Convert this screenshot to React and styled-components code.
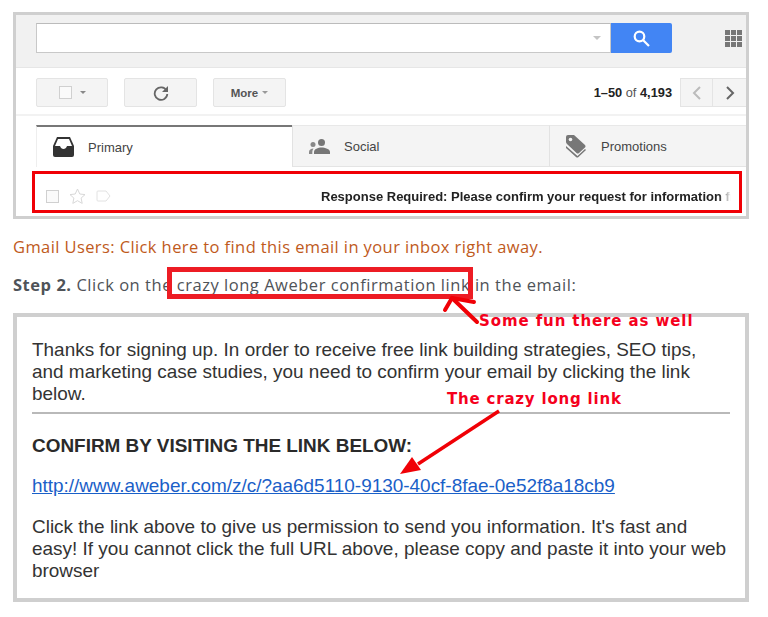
import React from 'react';
import styled, { createGlobalStyle } from 'styled-components';

const red = '#f00006';
const gray = '#cfcfcf';

const GlobalStyle = createGlobalStyle`
  body {
    margin: 0;
    background: #fff;
    font-family: "Liberation Sans", Arial, sans-serif;
  }
`;

const Page = styled.div`
  position: relative;
  width: 768px;
  height: 617px;
  padding: 12px 0 0 13px;
  box-sizing: border-box;
  overflow: hidden;
`;

const Panel = styled.div`
  width: 736px;
  box-sizing: border-box;
  height: 207px;
  border: 3px solid ${gray};
  overflow: hidden;
`;

const SearchBand = styled.div`
  height: 53px;
  box-sizing: border-box;
  padding: 8px 4px 0 20px;
  display: flex;
  background: #f1f1f1;
  border-bottom: 1px solid #e6e6e6;
`;

const SearchInput = styled.div`
  width: 575px;
  height: 30px;
  box-sizing: border-box;
  background: #fff;
  border: 1px solid #c8c8c8;
  border-top-color: #bbb;
  display: flex;
  align-items: center;
  justify-content: flex-end;
  padding-right: 9px;
`;

const Caret = styled.span`
  width: 0;
  height: 0;
  margin-left: ${p => p.$gap || 0}px;
  border-left: ${p => p.$size || 4}px solid transparent;
  border-right: ${p => p.$size || 4}px solid transparent;
  border-top: ${p => p.$size || 4}px solid ${p => p.$color || '#c4c4c4'};
`;

const SearchButton = styled.div`
  width: 61px;
  height: 30px;
  background: #4285f4;
  border-radius: 0 2px 2px 0;
  display: flex;
  align-items: center;
  justify-content: center;
`;

const AppsGrid = styled.div`
  margin: 7px 0 0 53px;
  width: 17px;
  height: 17px;
  display: grid;
  grid-template-columns: repeat(3, 5px);
  grid-auto-rows: 5px;
  gap: 1px;
`;

const AppsDot = styled.span`
  background: #777;
`;

const Toolbar = styled.div`
  height: 48px;
  box-sizing: border-box;
  padding: 10px 0 0 20px;
  display: flex;
  align-items: flex-start;
  gap: 16px;
  border-bottom: 2px solid #f2f2f2;
`;

const ToolButton = styled.div`
  width: ${p => p.$width || 73}px;
  height: 29px;
  box-sizing: border-box;
  background: #f4f4f4;
  border: 1px solid #e4e4e4;
  border-radius: 2px;
  display: flex;
  align-items: center;
  justify-content: center;
  font-size: 11.5px;
  font-weight: bold;
  color: #555;
`;

const Checkbox = styled.span`
  width: 13px;
  height: 13px;
  box-sizing: border-box;
  background: #fafafa;
  border: 1px solid #d0d0d0;
`;

const Pager = styled.div`
  margin-left: auto;
  display: flex;
  align-items: center;
  height: 29px;
`;

const PageCount = styled.span`
  font-size: 12.8px;
  color: #555;
  margin-right: 8px;
  b {
    color: #222;
  }
`;

const PagerButton = styled.div`
  width: 33px;
  height: 29px;
  box-sizing: border-box;
  background: #f4f4f4;
  border: 1px solid #e4e4e4;
  border-left: ${p => (p.$next ? 'none' : '1px solid #e4e4e4')};
  border-right: ${p => (p.$next ? 'none' : '1px solid #e4e4e4')};
  display: flex;
  align-items: center;
  justify-content: center;
`;

const Tabs = styled.div`
  margin: 9px 0 0 20px;
  height: 42px;
  display: flex;
`;

const Tab = styled.div`
  width: ${p => p.$width}px;
  box-sizing: border-box;
  display: flex;
  align-items: center;
  gap: ${p => p.$gap}px;
  padding-left: ${p => p.$pad}px;
  font-size: 13px;
  color: #444;
  background: ${p => (p.$active ? '#fff' : '#f4f4f4')};
  border-top: ${p => (p.$active ? '2px solid #777' : '1px solid #e8e8e8')};
  border-bottom: ${p => (p.$active ? 'none' : '1px solid #e4e4e4')};
  border-left: ${p => (p.$active ? '1px solid #eee' : '1px solid #e2e2e2')};
`;

const MailRow = styled.div`
  margin: 4px 0 0 16px;
  width: 710px;
  height: 42px;
  box-sizing: border-box;
  border: 3px solid ${red};
  display: flex;
  align-items: center;
  padding: 8px 8px 0 11px;
`;

const RowIcons = styled.div`
  display: flex;
  align-items: center;
  gap: 10px;
`;

const Subject = styled.div`
  margin-left: 210px;
  flex: 1;
  overflow: hidden;
  white-space: nowrap;
  font-size: 13px;
  font-weight: bold;
  color: #222;
  -webkit-mask-image: linear-gradient(to right, #000 97%, transparent);
  mask-image: linear-gradient(to right, #000 97%, transparent);
`;

const GmailNote = styled.div`
  margin-top: 19px;
  height: 18px;
  line-height: 18px;
  font-family: "Open Sans", sans-serif;
  font-size: 16.5px;
  letter-spacing: 0.4px;
  white-space: nowrap;
  color: #c05a1c;
`;

const StepLine = styled.div`
  margin-top: 20px;
  height: 18px;
  line-height: 18px;
  font-family: "Open Sans", sans-serif;
  font-size: 16.5px;
  letter-spacing: 0.53px;
  white-space: nowrap;
  color: #4f5358;
`;

const Highlight = styled.span`
  position: relative;
  &::after {
    content: '';
    position: absolute;
    left: -10px;
    right: -3px;
    top: -6px;
    bottom: -3px;
    border: 5px solid #ed1c24;
  }
`;

const EmailPanel = styled.div`
  margin-top: 19px;
  width: 736px;
  height: 289px;
  box-sizing: border-box;
  border: 4px solid ${gray};
  padding: 22px 15px 0 15px;
  font-size: 18.95px;
  line-height: 22px;
  color: #333;
`;

const Paragraph = styled.p`
  margin: 0;
`;

const Rule = styled.hr`
  margin: 7px 0 0;
  border: none;
  border-top: 2px solid #b9b9b9;
`;

const ConfirmHeading = styled.h2`
  margin: 21px 0 0;
  font-size: 18.95px;
  line-height: 22px;
  font-weight: bold;
  color: #2a2a2a;
`;

const EmailLink = styled.a`
  display: block;
  margin: 18px 0 19px;
  color: #1a60c8;
  text-decoration: underline;
`;

const Note = styled.div`
  position: absolute;
  left: ${p => p.$x}px;
  top: ${p => p.$y}px;
  font-family: "DejaVu Sans", sans-serif;
  font-size: 15px;
  font-weight: bold;
  letter-spacing: ${p => p.$spacing}px;
  line-height: 20px;
  white-space: nowrap;
  color: #f5001c;
`;

const Arrows = styled.svg`
  position: absolute;
  left: 0;
  top: 0;
  pointer-events: none;
`;

const InboxIcon = () => (
  <svg width="21" height="20" viewBox="0 0 21 20">
    <path fill="#333" d="M4 0h13l4 9v9a2 2 0 0 1-2 2H2a2 2 0 0 1-2-2V9z" />
    <path fill="#fff" d="M5 2h11l3 7h-5c-.6 2-2 3-3.500 3S7.600 11 7 9H2z" />
  </svg>
);

const PeopleIcon = () => (
  <svg width="21" height="15" viewBox="0 0 21 15">
    <circle cx="12.500" cy="3.500" r="3.500" fill="#777" />
    <circle cx="4" cy="5.500" r="2.500" fill="#888" />
    <path fill="#777" d="M5 15v-2c0-3 4-4.500 7.500-4.500S21 10 21 13v2z" />
    <path fill="#888" d="M0 15v-2c0-2 2-3.500 4.500-3.500-.8 1-1.200 2.200-1.200 3.500v2z" />
  </svg>
);

const TagsIcon = () => (
  <svg width="20" height="23" viewBox="0 0 20 23">
    <path fill="#777" d="M0 2a2 2 0 0 1 2-2h6l11 10a2 2 0 0 1 0 2.500l-6 5.500a2 2 0 0 1-2.500 0L1 9a3 3 0 0 1-1-2z" />
    <circle cx="4.500" cy="4.500" r="1.800" fill="#f4f4f4" />
    <path fill="#777" d="M0 11l11.500 10 7.500-7 1 1-7.500 7a2 2 0 0 1-2.500 0L0 13z" />
  </svg>
);

export default function App() {
  return (
    <>
      <GlobalStyle />
      <Page>
        <Panel>
          <SearchBand>
            <SearchInput>
              <Caret />
            </SearchInput>
            <SearchButton>
              <svg width="17" height="17" viewBox="0 0 17 17" fill="none" stroke="#fff" strokeWidth="2.200">
                <circle cx="6.500" cy="6.500" r="4.800" />
                <path d="M10 10l6 6" />
              </svg>
            </SearchButton>
            <AppsGrid>
              {Array.from({ length: 9 }).map((_, i) => (
                <AppsDot key={i} />
              ))}
            </AppsGrid>
          </SearchBand>
          <Toolbar>
            <ToolButton $width={72}>
              <Checkbox />
              <Caret $gap={8} $size={3} $color="#888" />
            </ToolButton>
            <ToolButton>
              <svg width="16" height="16" viewBox="0 0 16 16" fill="none">
                <path d="M13.500 5.500A6.300 6.300 0 1 0 14.300 9" stroke="#666" strokeWidth="1.800" />
                <path d="M15 1v6H9z" fill="#666" />
              </svg>
            </ToolButton>
            <ToolButton>
              More
              <Caret $gap={4} $size={3} $color="#999" />
            </ToolButton>
            <Pager>
              <PageCount>
                <b>1–50</b> of <b>4,193</b>
              </PageCount>
              <PagerButton>
                <svg width="10" height="14" viewBox="0 0 10 14" fill="none" stroke="#bbb" strokeWidth="2">
                  <path d="M8 1L2 7l6 6" />
                </svg>
              </PagerButton>
              <PagerButton $next>
                <svg width="10" height="14" viewBox="0 0 10 14" fill="none" stroke="#666" strokeWidth="2">
                  <path d="M2 1l6 6-6 6" />
                </svg>
              </PagerButton>
            </Pager>
          </Toolbar>
          <Tabs>
            <Tab $active $width={256} $gap={14} $pad={16}>
              <InboxIcon />
              Primary
            </Tab>
            <Tab $width={257} $gap={14} $pad={16}>
              <PeopleIcon />
              Social
            </Tab>
            <Tab $width={197} $gap={15} $pad={16}>
              <TagsIcon />
              Promotions
            </Tab>
          </Tabs>
          <MailRow>
            <RowIcons>
              <Checkbox />
              <svg width="17" height="16" viewBox="0 0 17 16" fill="none" stroke="#d8d8d8">
                <path d="M8.500 1l2.300 5 5.200.6-3.900 3.500 1.100 5.300-4.700-2.700-4.700 2.700 1.100-5.300L1 6.600 6.200 6z" />
              </svg>
              <svg width="15" height="12" viewBox="0 0 15 12" fill="none" stroke="#e2e2e2">
                <path d="M1 2a1 1 0 0 1 1-1h8l4 5-4 5H2a1 1 0 0 1-1-1z" />
              </svg>
            </RowIcons>
            <Subject>Response Required: Please confirm your request for information from</Subject>
          </MailRow>
        </Panel>

        <GmailNote>Gmail Users: Click here to find this email in your inbox right away.</GmailNote>
        <StepLine>
          <b>Step 2.</b> Click on the <Highlight>crazy long Aweber confirmation link</Highlight> in the email:
        </StepLine>

        <EmailPanel>
          <Paragraph>
            Thanks for signing up. In order to receive free link building strategies, SEO tips, and marketing case
            studies, you need to confirm your email by clicking the link below.
          </Paragraph>
          <Rule />
          <ConfirmHeading>CONFIRM BY VISITING THE LINK BELOW:</ConfirmHeading>
          <EmailLink>http://www.aweber.com/z/c/?aa6d5110-9130-40cf-8fae-0e52f8a18cb9</EmailLink>
          <Paragraph>
            Click the link above to give us permission to send you information. It's fast and easy! If you cannot click
            the full URL above, please copy and paste it into your web browser
          </Paragraph>
        </EmailPanel>

        <Arrows width="768" height="617" viewBox="0 0 768 617">
          <g fill="none" stroke={red} strokeWidth="4" strokeLinecap="round">
            <path d="M477 322L452 298" />
            <path d="M445 310L452 298L474 302" />
          </g>
          <path d="M499 411L418 464" stroke={red} strokeWidth="3.500" />
          <path d="M400 474L412 457L421 470z" fill={red} />
        </Arrows>
        <Note $x={479} $y={311} $spacing={0.9}>Some fun there as well</Note>
        <Note $x={447} $y={389} $spacing={0.8}>The crazy long link</Note>
      </Page>
    </>
  );
}
